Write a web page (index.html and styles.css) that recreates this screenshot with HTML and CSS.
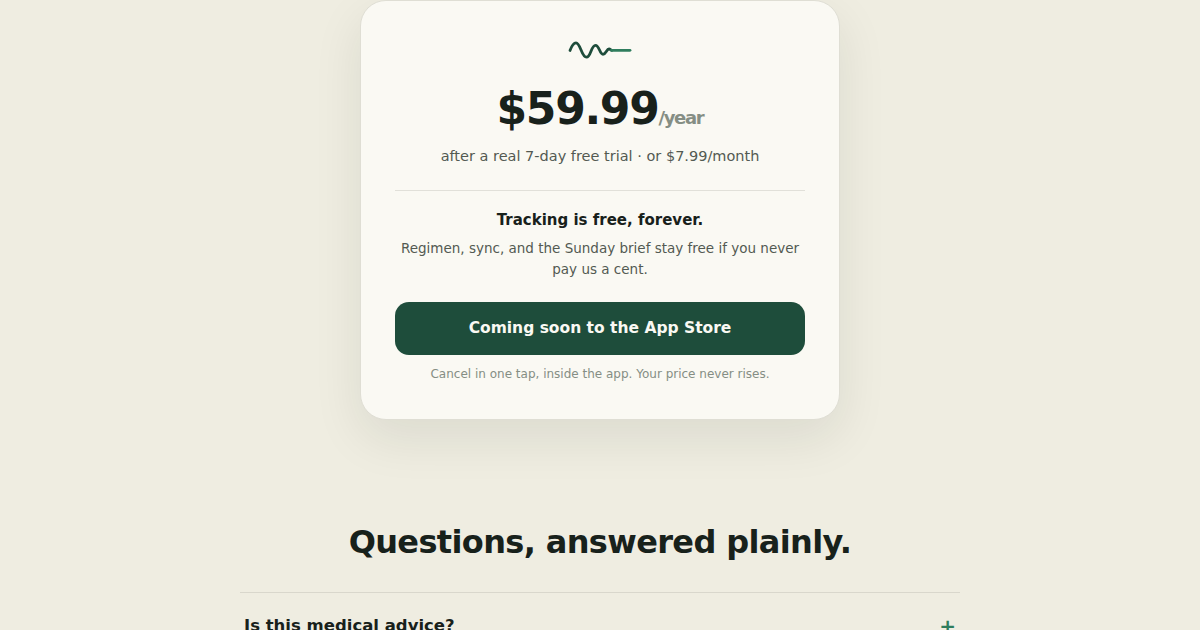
FILE: index.html
```
<!DOCTYPE html>
<html lang="en">
<head>
  <meta charset="UTF-8">
  <title>Pricing</title>
  <link rel="stylesheet" href="styles.css">
</head>
<body>

  <section class="pricing">
    <div class="price-card">
      <svg class="wave" width="64" height="24" viewBox="0 0 64 24" fill="none" stroke-width="2.8" stroke-linecap="round" stroke-linejoin="round">
        <path stroke="#1e4d3b" d="M2 11.500C4 6 5.500 3.800 8 3.800C12.500 3.800 13.500 18.200 18.500 18.200C23 18.200 23 6.300 27.500 6.300C31.500 6.300 31.500 15.300 35 15.300C38 15.300 38.500 10 41 10C42.500 10 42.500 11.300 44 11.300"/>
        <path stroke="#2f7d5d" d="M43.500 11.300H62"/>
      </svg>
      <div class="price">$59.99<span>/year</span></div>
      <p class="trial">after a real 7-day free trial · or $7.99/month</p>
      <div class="free">
        <strong>Tracking is free, forever.</strong>
        <p>Regimen, sync, and the Sunday brief stay free if you never pay us a cent.</p>
      </div>
      <a class="btn">Coming soon to the App Store</a>
      <p class="cancel">Cancel in one tap, inside the app. Your price never rises.</p>
    </div>
  </section>

  <section class="faq">
    <h2>Questions, answered plainly.</h2>
    <div class="faq-list">
      <div class="question"><span>Is this medical advice?</span><span class="plus">+</span></div>
    </div>
  </section>

</body>
</html>
```

FILE: styles.css
```
* {
  box-sizing: border-box;
}

body {
  margin: 0;
  height: 630px;
  overflow: hidden;
  background: #efede1;
  color: #18211b;
  font-family: "DejaVu Sans", sans-serif;
  line-height: 1.6;
}

p {
  margin: 0;
}

.price-card {
  width: 480px;
  height: 420px;
  margin: 0 auto;
  padding: 38px 34px 0;
  background: #faf9f3;
  border: 1px solid #dfded4;
  border-radius: 26px;
  box-shadow: 0 18px 50px rgba(24, 33, 27, 0.09);
  text-align: center;
}

.wave {
  display: block;
  margin: 0 auto;
}

.price {
  margin-top: 22px;
  font-size: 44px;
  font-weight: bold;
  line-height: 48px;
  letter-spacing: -1.32px;
}

.price span {
  color: #858e84;
  font-size: 18px;
}

.trial {
  margin-top: 2px;
  color: #535a52;
  font-size: 14.5px;
  line-height: 24px;
}

.free {
  margin-top: 22px;
  padding-top: 16px;
  border-top: 1px solid #e1e0d9;
}

.free strong {
  display: block;
  font-size: 15px;
  line-height: 26px;
}

.free p {
  margin-top: 5px;
  color: #535a52;
  font-size: 13.5px;
  line-height: 21px;
}

.btn {
  display: block;
  margin-top: 22px;
  height: 53px;
  border-radius: 14px;
  background: #1e4d3b;
  color: #faf9f3;
  font-size: 15.5px;
  font-weight: bold;
  line-height: 52px;
}

.cancel {
  margin-top: 9px;
  color: #858e84;
  font-size: 12px;
  line-height: 20px;
}

.faq {
  width: 720px;
  margin: 100px auto 0;
}

.faq h2 {
  margin: 0;
  font-size: 32px;
  line-height: 44px;
  letter-spacing: -0.64px;
  text-align: center;
}

.faq-list {
  margin-top: 28px;
  border-top: 1px solid #d9d7cc;
}

.question {
  display: flex;
  justify-content: space-between;
  align-items: center;
  padding: 18px 4px;
  font-size: 16.5px;
  font-weight: bold;
}

.plus {
  color: #2f7d5d;
  font-size: 20px;
  line-height: 30px;
}
```
